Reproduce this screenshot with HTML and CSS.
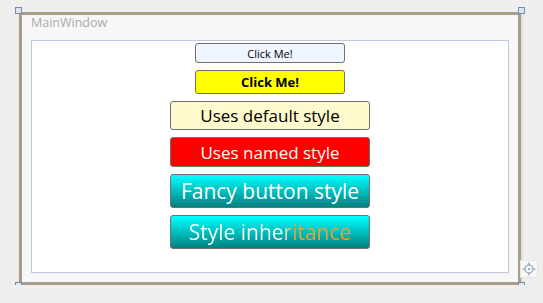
FILE: index.html
```html
<!DOCTYPE html>
<html lang="en">
<head>
  <meta charset="UTF-8">
  <title>MainWindow</title>
  <link rel="stylesheet" href="styles.css">
</head>
<body>
  <div class="designer">
    <div class="window">
      <span class="handle handle-tl"></span>
      <span class="handle handle-tr"></span>
      <span class="handle handle-bl"></span>
      <span class="handle handle-br"></span>
      <div class="title">MainWindow</div>
      <div class="panel">
        <button class="btn btn-plain">Click Me!</button>
        <button class="btn btn-yellow">Click Me!</button>
        <button class="btn btn-default">Uses default style</button>
        <button class="btn btn-named">Uses named style</button>
        <button class="btn btn-fancy">Fancy button style</button>
        <button class="btn btn-fancy btn-inherit"><span class="inherit-text">Style inheritance</span></button>
      </div>
      <div class="snap">
        <svg width="14" height="14" viewBox="0 0 14 14">
          <circle cx="7" cy="7" r="4" fill="none" stroke="#9ab0c8" stroke-width="1.5"/>
          <line x1="7" y1="0.5" x2="7" y2="3.5" stroke="#9ab0c8" stroke-width="1.5"/>
          <line x1="7" y1="10.5" x2="7" y2="13.5" stroke="#9ab0c8" stroke-width="1.5"/>
          <line x1="0.5" y1="7" x2="3.5" y2="7" stroke="#9ab0c8" stroke-width="1.5"/>
          <line x1="10.5" y1="7" x2="13.5" y2="7" stroke="#9ab0c8" stroke-width="1.5"/>
          <rect x="6" y="6" width="2" height="2" fill="#9ab0c8"/>
        </svg>
      </div>
    </div>
  </div>
</body>
</html>
```

FILE: styles.css
```css
body {
  margin: 0;
  background-color: #efefef;
  font-family: "Open Sans", "Noto Sans", sans-serif;
}
.designer {
  padding: 12px 0 0 19px;
}
.window {
  position: relative;
  width: 496px;
  height: 267px;
  border: 3px solid #a89c8a;
  background-color: #f7f7f7;
  box-shadow: 1px 2px 3px rgba(0, 0, 0, 0.12);
  display: flex;
  flex-direction: column;
}
.title {
  height: 25px;
  padding-left: 9px;
  font-size: 12.5px;
  line-height: 16px;
  color: #aaaaaa;
}
.panel {
  margin: 0 9px;
  height: 229px;
  border: 1px solid #bccadb;
  background-color: #fff;
  display: flex;
  flex-direction: column;
  align-items: center;
  gap: 7px;
  padding-top: 2px;
}
.btn {
  font-family: "Open Sans", "Noto Sans", sans-serif;
  border: 1px solid #707070;
  border-radius: 3px;
  padding: 0;
  color: #000;
  width: 200px;
}
.btn-plain {
  width: 150px;
  height: 20px;
  background-color: #f0f6ff;
  font-size: 11px;
}
.btn-yellow {
  width: 150px;
  height: 24px;
  background-color: #ffff00;
  font-size: 13px;
  font-weight: bold;
}
.btn-default {
  height: 29px;
  background-color: #fffacd;
  font-size: 17px;
}
.btn-named {
  height: 30px;
  background-color: #ff0000;
  color: #fff;
  font-size: 17px;
}
.btn-fancy {
  height: 34px;
  background: linear-gradient(#00ffff, #008080);
  color: #fff;
  font-size: 21px;
}
.inherit-text {
  background: linear-gradient(90deg, #ffffff 0%, #ffffff 57%, #f0a030 64%, #f0a030 100%);
  -webkit-background-clip: text;
  background-clip: text;
  color: transparent;
}
.handle {
  position: absolute;
  width: 5px;
  height: 5px;
  border: 1px solid #6f8eb0;
  background-color: #dce6f0;
}
.handle-tl { left: -7px; top: -8px; }
.handle-tr { right: -7px; top: -8px; }
.handle-bl { left: -7px; bottom: -7px; }
.handle-br { right: -7px; bottom: -7px; }
.snap {
  position: absolute;
  right: -20px;
  bottom: 4px;
  width: 16px;
  height: 16px;
  display: flex;
  align-items: center;
  justify-content: center;
  background-color: #f8f8f8;
  border: 1px solid #e4e4e4;
}
```
